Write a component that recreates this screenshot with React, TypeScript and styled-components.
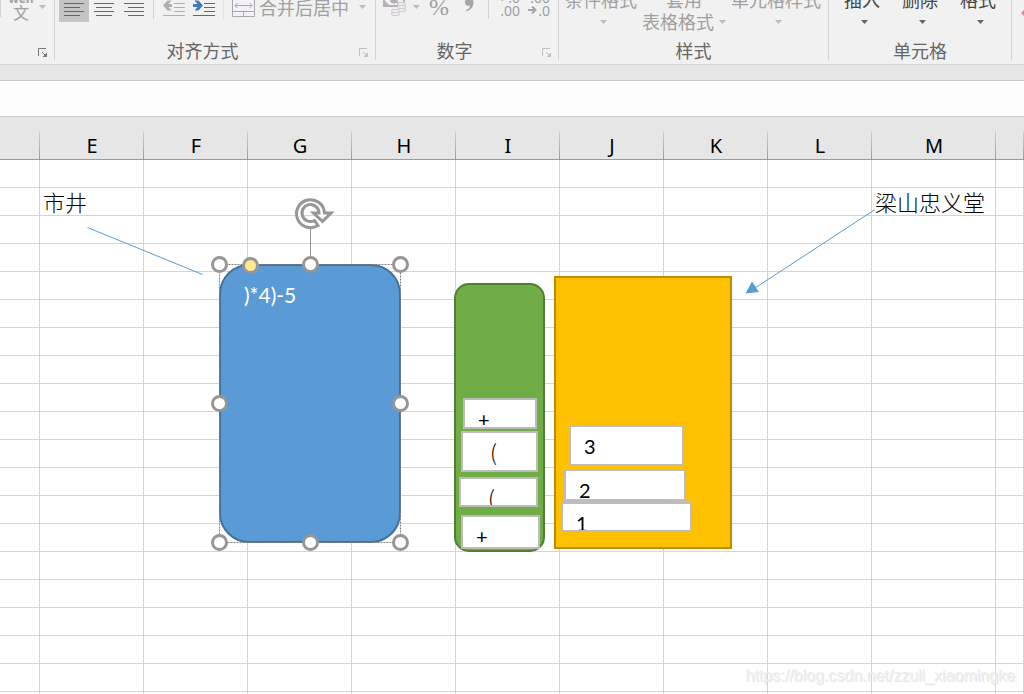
import React from 'react';
import styled, { createGlobalStyle, css } from 'styled-components';

const GlobalStyle = createGlobalStyle`
  * { box-sizing: border-box; }
  body {
    margin: 0;
    overflow: hidden;
    background: #fff;
    font-family: 'Noto Sans', 'Noto Sans CJK SC', sans-serif;
  }
`;

const Page = styled.div`
  display: flex;
  flex-direction: column;
  height: 100vh;
  overflow: hidden;
`;

/* ---------- Ribbon ---------- */

const Ribbon = styled.header`
  display: flex;
  flex: none;
  padding-bottom: 4px;
  background: #f1f1f1;
  border-bottom: 1px solid #d5d5d5;
`;

const Group = styled.section<{ $width?: number }>`
  display: flex;
  flex-direction: column;
  flex: ${(p) => (p.$width ? `0 0 ${p.$width}px` : '1 0 0')};
  min-width: 0;
  height: 60px;
  border-right: ${(p) => (p.$width ? '1px solid #d2d2d2' : 'none')};
`;

const Tools = styled.div<{ $bottom: number; $left?: number; $gap?: number }>`
  display: flex;
  align-items: flex-end;
  height: 40px;
  gap: ${(p) => p.$gap ?? 0}px;
  padding: 0 0 ${(p) => p.$bottom}px ${(p) => p.$left ?? 0}px;
`;

const GroupFooter = styled.div`
  display: flex;
  height: 20px;
`;

const GroupLabel = styled.span<{ $beside?: boolean }>`
  flex: 1;
  padding-right: ${(p) => (p.$beside ? 2 : 0)}px;
  text-align: center;
  font: 18px/20px 'Noto Sans CJK SC', sans-serif;
  color: #666;
`;

const bareButton = css`
  border: 0;
  padding: 0;
  margin: 0;
  background: none;
  flex: none;
`;

const Launcher = styled.button`
  ${bareButton}
  display: flex;
  align-items: flex-start;
  justify-content: center;
  width: 23px;
  height: 20px;
  padding-top: 8px;
`;

const ToolButton = styled.button<{ $active?: boolean; $wide?: boolean }>`
  ${bareButton}
  display: flex;
  align-items: center;
  justify-content: ${(p) => (p.$wide ? 'flex-start' : 'center')};
  width: ${(p) => (p.$wide ? 'auto' : '30px')};
  padding: ${(p) => (p.$wide ? '0 4px 0 3px' : '0')};
  height: 30px;
  background: ${(p) => (p.$active ? '#c5c5c5' : 'transparent')};
  color: #a0a0a0;
  font: 18px/30px 'Noto Sans CJK SC', sans-serif;
  svg { display: block; flex: none; }
`;

const MergeLabel = styled.span`
  padding: 0 10px 0 4px;
`;

const CaretSpace = styled.span`
  width: 6px;
`;

const Percent = styled.span`
  font: 24px/28px 'Liberation Serif', serif;
`;

const Divider = styled.span<{ $faint?: boolean }>`
  flex: none;
  width: 1px;
  height: 30px;
  margin: 0 5px 3px 4px;
  background: ${(p) => (p.$faint ? '#e2e2e2' : '#d2d2d2')};
`;

const EdgeDivider = styled(Divider)`
  margin: 0 0 5px;
`;

const Phonetic = styled.span`
  display: flex;
  flex-direction: column;
  align-items: center;
  width: 28px;
  padding: 0 0 3px 6px;
  margin-right: 7px;
  font: 16px/14px 'Noto Sans CJK SC', sans-serif;
  small { font: bold 12px/12px 'Noto Sans', sans-serif; }
`;

const Decimals = styled.span`
  display: flex;
  flex-direction: column;
  align-items: flex-end;
  width: 22px;
  padding-bottom: 7px;
  font: 14px/13px 'Noto Sans', sans-serif;
  span { display: flex; align-items: center; gap: 1px; }
`;

const BigButton = styled.button<{ $enabled?: boolean }>`
  ${bareButton}
  display: flex;
  flex-direction: column;
  align-items: center;
  color: ${(p) => (p.$enabled ? '#444' : '#a0a0a0')};
  font: 18px/22px 'Noto Sans CJK SC', sans-serif;
`;

const BigLine = styled.span<{ $caretOnly?: boolean }>`
  display: flex;
  align-items: center;
  gap: 5px;
  height: 22px;
  padding-left: ${(p) => (p.$caretOnly ? 5 : 0)}px;
`;

const BigText = styled.span`
  padding-bottom: 3px;
`;

const Caret = ({ dark }: { dark?: boolean }) => (
  <svg width="7" height="4" viewBox="0 0 7 4" aria-hidden="true">
    <path d="M0 0h7L3.5 4z" fill={dark ? '#666' : '#bcbcbc'} />
  </svg>
);

const LaunchIcon = ({ dark }: { dark?: boolean }) => {
  const c = dark ? '#777' : '#c0c0c0';
  return (
    <svg width="9" height="10" viewBox="0 0 9 10" aria-hidden="true">
      <path d="M.5 8V.5H8M4 4l4 4" fill="none" stroke={c} />
      <path d="M9 4.500V9H4.500z" fill={c} />
    </svg>
  );
};

const AlignIcon = ({ inset }: { inset: number }) => (
  <svg width="20" height="30" viewBox="0 -8 20 30" aria-hidden="true">
    <path
      d={`M0 -4.500h20M${inset} -.5h16M0 3.500h20M${inset} 7.500h16M0 11.500h20M${inset} 15.500h16`}
      stroke="#666"
      fill="none"
    />
  </svg>
);

const IndentIcon = ({ increase }: { increase?: boolean }) => {
  const line = increase ? '#666' : '#b0b0b0';
  return (
    <svg width="22" height="30" viewBox="0 -8 22 30" aria-hidden="true">
      <path d="M11 3.500h11M11 7.500h11M11 11.500h11M0 15.500h22M0 -.5h22" stroke={line} fill="none" />
      {increase ? (
        <path d="M0 4h4.500L1.500 .5h4L10 5.500 5.500 10.500h-4L4.500 7H0z" fill="#3f7cb8" />
      ) : (
        <path d="M9 4H5.500L8.500 .5h-4L0 5.500 4.500 10.500h4L5.500 7H9z" fill="#b0b0b0" />
      )}
    </svg>
  );
};

const MergeIcon = () => (
  <svg width="23" height="30" viewBox="0 -8 23 30" aria-hidden="true">
    <path d="M.5 -5.500h22v22H.5z" fill="#f6f0f8" stroke="#a8a8a8" />
    <path d="M.5 -.5h22M.5 11.500h22M11.500 11.500v5M11.500 -5.500v5" stroke="#a8a8a8" fill="none" />
    <path d="M3 5.500h17M5.500 3l-2.500 2.500 2.500 2.500M17.500 3l2.500 2.500-2.500 2.500" stroke="#a8a8a8" fill="none" />
  </svg>
);

const CurrencyIcon = () => (
  <svg width="24" height="30" viewBox="0 -8 24 30" aria-hidden="true">
    <path d="M0 -6h22v8h-7v5H0z" fill="#b4b0b6" />
    <path d="M2 -4h18v6h-6v3H2z" fill="#f1f1f1" />
    <circle cx="11" cy="-.5" r="4" fill="#b4b0b6" />
    <path d="M2 1l4 4H2z" fill="#b4b0b6" />
    <g fill="#f1ebef" stroke="#d0cacf">
      <rect x="14.500" y="2.500" width="8" height="3" rx="1.500" />
      <rect x="14.500" y="5.500" width="8" height="3" rx="1.500" />
      <rect x="14.500" y="8.500" width="8" height="3" rx="1.500" />
      <rect x="8.500" y="9.500" width="8" height="3" rx="1.500" />
      <rect x="8.500" y="12.500" width="8" height="3" rx="1.500" />
    </g>
  </svg>
);

const CommaIcon = () => (
  <svg width="10" height="30" viewBox="0 -8 10 30" aria-hidden="true">
    <path d="M5 -2C8 -2 9.500 0 9.500 3c0 4-3 7-7 8.500L2 10c2.500-1 4-2.500 4-4.500C3 6.500 1 5 1 2c0-2.500 1.500-4 4-4z" fill="#a6a6a6" />
  </svg>
);

const ArrowIcon = ({ left }: { left?: boolean }) => (
  <svg width="9" height="8" viewBox="0 0 9 8" aria-hidden="true">
    <path d={left ? 'M9 4H2M5 .5L1.500 4l3.500 3.500' : 'M0 4h7M4 .5L7.500 4 4 7.500'} fill="none" stroke="#a6a6a6" strokeWidth="2" />
  </svg>
);

const EraserIcon = () => (
  <svg width="12" height="10" viewBox="0 0 12 10" aria-hidden="true">
    <path d="M0 5l4-4h8v8H4z" fill="#e8829c" />
  </svg>
);

/* ---------- Formula bar ---------- */

const FormulaRow = styled.div`
  flex: none;
  padding-top: 15px;
  background: #e6e6e6;
`;

const FormulaInput = styled.input`
  display: block;
  width: 100%;
  height: 37px;
  border: solid #c6c6c6;
  border-width: 1px 0;
  border-radius: 0;
  padding: 0 12px;
  background: #fdfdfd;
  font-size: 18px;
  outline: none;
`;

/* ---------- Sheet ---------- */

const Sheet = styled.main`
  position: relative;
  flex: 1;
  min-height: 0;
  overflow: hidden;
`;

const Grid = styled.table`
  width: 100%;
  table-layout: fixed;
  border-collapse: separate;
  border-spacing: 0;
`;

const HeadCell = styled.th`
  height: 43px;
  padding: 15px 0 0;
  border-bottom: 1px solid #9b9b9b;
  background: linear-gradient(#d0d0d0, #9b9b9b) right bottom / 1px 28px no-repeat #e6e6e6;
  font: 20px/27px 'Noto Sans', sans-serif;
  color: #000;
`;

const Cell = styled.td`
  height: 28px;
  padding: 0 0 0 3px;
  border: solid #d4d4d4;
  border-width: 0 1px 1px 0;
  font: 22px/27px 'Noto Sans CJK SC', sans-serif;
  font-weight: 300;
  color: #000;
  white-space: nowrap;
`;

const Drawing = styled.div`
  position: absolute;
  inset: 43px 0 0 0;
`;

type Box = { $x: number; $y: number; $w: number; $h: number };

const placed = css<Box>`
  position: absolute;
  left: ${(p) => p.$x}px;
  top: ${(p) => p.$y}px;
  width: ${(p) => p.$w}px;
  height: ${(p) => p.$h}px;
`;

const Shape = styled.div<Box & { $fill: string; $line: string; $radius?: number }>`
  ${placed}
  padding: 17px 23px;
  border: 2px solid ${(p) => p.$line};
  border-radius: ${(p) => p.$radius ?? 0}px;
  background: ${(p) => p.$fill};
  color: #fff;
  font: 21px/24px Lato, sans-serif;
`;

const TextBox = styled.div<Box & { $indent?: boolean }>`
  ${placed}
  overflow: hidden;
  padding: 7px 0 0 ${(p) => (p.$indent ? 27 : 13)}px;
  border: 2px solid #bcbcbc;
  background: #fff;
  color: #000;
  font: ${(p) => (p.$indent ? "300 22px/22px 'Noto Sans CJK SC', sans-serif" : '20px/24px Lato, sans-serif')};
`;

const Overlay = styled.svg`
  position: absolute;
  left: 0;
  top: 0;
  pointer-events: none;
`;

const Watermark = styled.span`
  position: absolute;
  right: 9px;
  bottom: 8px;
  font: 16px/20px 'Liberation Sans', Arial, sans-serif;
  color: #f0f0f0;
  text-shadow: 1px 1px 0 #e6e6e6;
`;

const columns = [
  { name: '', width: 40 },
  { name: 'E', width: 104 },
  { name: 'F', width: 104 },
  { name: 'G', width: 104 },
  { name: 'H', width: 104 },
  { name: 'I', width: 104 },
  { name: 'J', width: 104 },
  { name: 'K', width: 104 },
  { name: 'L', width: 104 },
  { name: 'M', width: 124 },
  { name: '', width: 0 },
];

const cellText: Record<string, string> = { '1-E': '市井', '1-M': '梁山忠义堂' };

const textBoxes = [
  { text: '+', x: 463, y: 238, w: 74, h: 31 },
  { text: '(', x: 461, y: 271, w: 77, h: 41, indent: true },
  { text: '(', x: 459, y: 317, w: 79, h: 30, indent: true },
  { text: '+', x: 461, y: 355, w: 79, h: 34 },
  { text: '3', x: 569, y: 265, w: 115, h: 41 },
  { text: '2', x: 564, y: 309, w: 122, h: 32 },
  { text: '1', x: 561, y: 342, w: 131, h: 30 },
];

const handles = [
  [219.5, 104.5], [310.5, 104.5], [400.5, 104.5],
  [219.5, 243.5], [400.5, 243.5],
  [219.5, 382.5], [310.5, 382.5], [400.5, 382.5],
];

export default function App() {
  return (
    <Page>
      <GlobalStyle />
      <Ribbon>
        <Group $width={55}>
          <Tools $bottom={18}>
            <EdgeDivider />
            <ToolButton $wide aria-label="拼音">
              <Phonetic><small>wén</small>文</Phonetic>
              <Caret />
            </ToolButton>
          </Tools>
          <GroupFooter>
            <GroupLabel />
            <Launcher aria-label="字体设置"><LaunchIcon dark /></Launcher>
          </GroupFooter>
        </Group>

        <Group $width={321}>
          <Tools $bottom={18} $left={4}>
            <ToolButton $active aria-label="左对齐"><AlignIcon inset={0} /></ToolButton>
            <ToolButton aria-label="居中"><AlignIcon inset={2} /></ToolButton>
            <ToolButton aria-label="右对齐"><AlignIcon inset={4} /></ToolButton>
            <Divider />
            <ToolButton aria-label="减少缩进量"><IndentIcon /></ToolButton>
            <ToolButton aria-label="增加缩进量"><IndentIcon increase /></ToolButton>
            <Divider $faint />
            <ToolButton $wide>
              <MergeIcon />
              <MergeLabel>合并后居中</MergeLabel>
              <Caret />
            </ToolButton>
          </Tools>
          <GroupFooter>
            <GroupLabel $beside>对齐方式</GroupLabel>
            <Launcher aria-label="对齐设置"><LaunchIcon /></Launcher>
          </GroupFooter>
        </Group>

        <Group $width={183}>
          <Tools $bottom={18} $left={4}>
            <ToolButton $wide aria-label="会计数字格式">
              <CurrencyIcon />
              <CaretSpace />
              <Caret />
            </ToolButton>
            <ToolButton><Percent>%</Percent></ToolButton>
            <ToolButton aria-label="千位分隔样式"><CommaIcon /></ToolButton>
            <Divider />
            <ToolButton>
              <Decimals><span><ArrowIcon left />.0</span><span>.00</span></Decimals>
            </ToolButton>
            <ToolButton>
              <Decimals><span>.00</span><span><ArrowIcon />.0</span></Decimals>
            </ToolButton>
          </Tools>
          <GroupFooter>
            <GroupLabel $beside>数字</GroupLabel>
            <Launcher aria-label="数字设置"><LaunchIcon /></Launcher>
          </GroupFooter>
        </Group>

        <Group $width={270}>
          <Tools $bottom={7} $left={6} $gap={5}>
            <BigButton>
              <BigLine><BigText>条件格式</BigText></BigLine>
              <BigLine $caretOnly><Caret /></BigLine>
            </BigButton>
            <BigButton>
              <BigLine><BigText>套用</BigText></BigLine>
              <BigLine><BigText>表格格式</BigText><Caret /></BigLine>
            </BigButton>
            <BigButton>
              <BigLine><BigText>单元格样式</BigText></BigLine>
              <BigLine $caretOnly><Caret /></BigLine>
            </BigButton>
          </Tools>
          <GroupFooter><GroupLabel>样式</GroupLabel></GroupFooter>
        </Group>

        <Group $width={183}>
          <Tools $bottom={7} $left={15} $gap={22}>
            {['插入', '删除', '格式'].map((label) => (
              <BigButton key={label} $enabled>
                <BigLine><BigText>{label}</BigText></BigLine>
                <BigLine $caretOnly><Caret dark /></BigLine>
              </BigButton>
            ))}
          </Tools>
          <GroupFooter><GroupLabel>单元格</GroupLabel></GroupFooter>
        </Group>

        <Group>
          <Tools $bottom={12}>
            <ToolButton aria-label="清除"><EraserIcon /></ToolButton>
          </Tools>
        </Group>
      </Ribbon>

      <FormulaRow>
        <FormulaInput aria-label="编辑栏" />
      </FormulaRow>

      <Sheet>
        <Grid>
          <colgroup>
            {columns.map((c, i) => (
              <col key={i} width={c.width || undefined} />
            ))}
          </colgroup>
          <thead>
            <tr>{columns.map((c, i) => <HeadCell key={i}>{c.name}</HeadCell>)}</tr>
          </thead>
          <tbody>
            {Array.from({ length: 20 }, (_, row) => (
              <tr key={row}>
                {columns.map((c, i) => <Cell key={i}>{cellText[`${row}-${c.name}`]}</Cell>)}
              </tr>
            ))}
          </tbody>
        </Grid>

        <Drawing>
          <Shape $x={219} $y={104} $w={182} $h={279} $radius={30} $fill="#5b9bd5" $line="#41719c">)*4)-5</Shape>
          <Shape $x={454} $y={123} $w={91} $h={269} $radius={15} $fill="#70ad47" $line="#507e32" />
          <Shape $x={554} $y={116} $w={178} $h={273} $fill="#ffc000" $line="#bc8c00" />
          {textBoxes.map((b, i) => (
            <TextBox key={i} $x={b.x} $y={b.y} $w={b.w} $h={b.h} $indent={b.indent}>{b.text}</TextBox>
          ))}
          <Overlay width="1024" height="534" viewBox="0 0 1024 534" aria-hidden="true">
            <g stroke="#5b9bd5" fill="none">
              <path d="M87.500 67.500L202.500 114.500M875 49.500L755 128" />
              <path d="M745.500 133.500L752 121.500 759 132z" fill="#5b9bd5" stroke="none" />
            </g>
            <path d="M219.500 104.500h181v278h-181z" fill="none" stroke="#808080" strokeDasharray="2 1" />
            <path d="M310.500 69v30" stroke="#969696" />
            <g fill="#fff" stroke="#969696" strokeWidth="3">
              {handles.map(([x, y]) => <circle key={`${x}-${y}`} cx={x} cy={y} r="7" />)}
              <circle cx="250.500" cy="105.500" r="7" fill="#ffe98f" />
            </g>
            <path
              d="M318 65.500A14 14 0 1 1 324.500 53H331L322.500 61.500 313.500 53H319A8.500 8.500 0 1 0 314.500 60.500z"
              fill="#fff"
              stroke="#969696"
              strokeWidth="3"
            />
          </Overlay>
        </Drawing>
        <Watermark>https://blog.csdn.net/zzuli_xiaomingke</Watermark>
      </Sheet>
    </Page>
  );
}
